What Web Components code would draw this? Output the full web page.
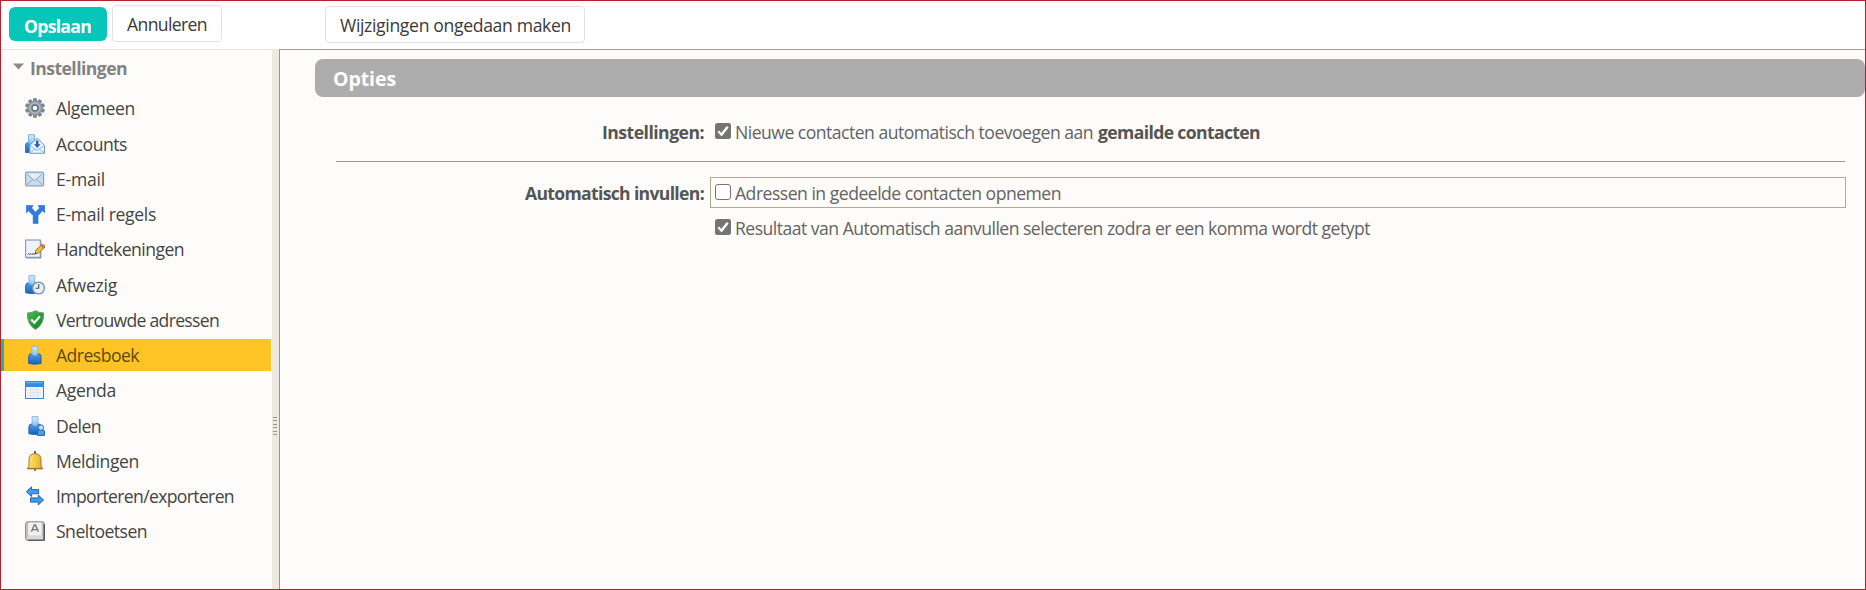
<!DOCTYPE html>
<html lang="nl">
<head>
<meta charset="utf-8">
<title>Instellingen - Adresboek</title>
<style>
  html, body { margin: 0; height: 100%; }
  body {
    overflow: hidden;
    font-family: "Open Sans", "Noto Sans", sans-serif;
    font-size: 17.6px;
    line-height: 20px;
    color: #444;
  }
</style>
</head>
<body>
<settings-page>
  <tool-bar slot="toolbar">
    <tool-button primary><fit-label width="67">Opslaan</fit-label></tool-button>
    <tool-button><fit-label width="80">Annuleren</fit-label></tool-button>
    <tool-button detached><fit-label width="231">Wijzigingen ongedaan maken</fit-label></tool-button>
  </tool-bar>
  <side-nav slot="nav">
    <fit-label slot="title" width="97">Instellingen</fit-label>
    <nav-item icon="gear"><fit-label width="79">Algemeen</fit-label></nav-item>
    <nav-item icon="accounts"><fit-label width="71">Accounts</fit-label></nav-item>
    <nav-item icon="mail"><fit-label width="49">E-mail</fit-label></nav-item>
    <nav-item icon="rules"><fit-label width="100">E-mail regels</fit-label></nav-item>
    <nav-item icon="signature"><fit-label width="128">Handtekeningen</fit-label></nav-item>
    <nav-item icon="away"><fit-label width="61">Afwezig</fit-label></nav-item>
    <nav-item icon="shield"><fit-label width="163">Vertrouwde adressen</fit-label></nav-item>
    <nav-item icon="person" selected><fit-label width="83">Adresboek</fit-label></nav-item>
    <nav-item icon="calendar"><fit-label width="60">Agenda</fit-label></nav-item>
    <nav-item icon="share"><fit-label width="45">Delen</fit-label></nav-item>
    <nav-item icon="bell"><fit-label width="83">Meldingen</fit-label></nav-item>
    <nav-item icon="transfer"><fit-label width="178">Importeren/exporteren</fit-label></nav-item>
    <nav-item icon="key"><fit-label width="91">Sneltoetsen</fit-label></nav-item>
  </side-nav>
  <option-panel>
    <fit-label slot="title" width="63">Opties</fit-label>
    <option-group>
      <fit-label slot="label" width="102">Instellingen:</fit-label>
      <option-check checked>
        <fit-label width="358">Nieuwe contacten automatisch toevoegen aan</fit-label>
        <fit-label width="162" bold>gemailde contacten</fit-label>
      </option-check>
    </option-group>
    <option-rule></option-rule>
    <option-group>
      <fit-label slot="label" width="179">Automatisch invullen:</fit-label>
      <option-check framed><fit-label width="326">Adressen in gedeelde contacten opnemen</fit-label></option-check>
      <option-check checked><fit-label width="635">Resultaat van Automatisch aanvullen selecteren zodra er een komma wordt getypt</fit-label></option-check>
    </option-group>
  </option-panel>
</settings-page>

<script>
'use strict';

const PERSON = (x, y, s) => `
  <g transform="translate(${x} ${y}) scale(${s})">
    <path d="M.7 18.6V11.5q0-3 3-3h6.6q3 0 3 3v7.1q-6.3 1.4-12.6 0z" fill="url(#blue)" stroke="#2262ab"/>
    <path d="M4 1h6v8q-3 2.6-6 0z" fill="url(#head)" stroke="#7fb3e2" stroke-width=".9"/>
  </g>`;

const ICONS = {
  gear: `
    <g fill="#7d8893" stroke="#626c76" stroke-width=".6">
      ${[0, 36, 72, 108, 144].map(a => `<rect x="8.4" y=".5" width="3.2" height="19" rx=".7" transform="rotate(${a} 10 10)"/>`).join('')}
    </g>
    <circle cx="10" cy="10" r="7.2" fill="#8c98a4"/>
    <circle cx="10" cy="10" r="5.1" fill="none" stroke="#b4bec7" stroke-width="1.3"/>
    <circle cx="10" cy="10" r="2.9" fill="#fdfcfa" stroke="#626c76" stroke-width="1.2"/>`,
  accounts: `
    <path d="M.5 18.5V11q0-2.5 3-2.5h5v10z" fill="url(#blue)" stroke="#3b79b7"/>
    <path d="M3.5.7h6v8.5h-6z" fill="url(#head)" stroke="#82b3df"/>
    <path d="M4.8 11.3L12.2 4l7.3 7.3v8h-14.7z" fill="#e6f1fc" stroke="#769cc9"/>
    <path d="M5 11.7l7 4.6 7.3-4.6M5 19l5-4M19.3 19l-5-4" fill="none" stroke="#91b2d8" stroke-width=".9"/>
    <path d="M11 6.5h2.4v3.7h2.1L12.2 14 9 10.2h2z" fill="#215fbd"/>`,
  mail: `
    <rect x=".6" y="3.2" width="18" height="13.6" rx="1" fill="#cbdcee" stroke="#8ba4be" stroke-width="1.2"/>
    <path d="M2 5l7.5 6.8L17 5M2 15.6l5.5-5.2m4 0l5.5 5.2" fill="none" stroke="#8da7c4"/>
    <path d="M2.8 4.8h13.4L9.5 10.7z" fill="#e4effa"/>`,
  rules: `
    <path d="M1.5 1.5H8L6.6 4l4 4.2 4-4.2-1.4-2.5h6.6v7.3l-2.2-2-4.6 4.8v7.8H8.2v-7.8L3.6 6.8l-2.1 2z" fill="#2f7ce0" stroke="#2667bd" stroke-width=".6"/>`,
  signature: `
    <rect x=".7" y="1" width="14.6" height="17.3" fill="#eef3fa" stroke="#758ca8"/>
    <path d="M15.8 2v16.8H1.5" fill="none" stroke="#8799ae" stroke-width="1.2"/>
    <path d="M2.5 15.5l1.2-1 1 1 1.2-1 1 1 1.2-1 1.5 1" fill="none" stroke="#394657"/>
    <path d="M10 15l1-4.2 6-5 2.5 2.8-5.8 5.3z" fill="#f2c535" stroke="#7b642c" stroke-width=".8"/>
    <path d="M16 6.6l1.3-1.2q2.8 0 2.5 2.9l-1.4 1.2z" fill="#d97a66" stroke="#915549" stroke-width=".6"/>
    <path d="M9.7 15.2l.6-2 1.4 1.2z" fill="#2d2d2d"/>`,
  away: `${PERSON(0, -.4, .98)}
    <circle cx="13.5" cy="13" r="5.9" fill="#e7eef5" stroke="#7891aa" stroke-width="1.3"/>
    <path d="M13.7 9v4.3h-3.3" fill="none" stroke="#425469" stroke-width="1.1"/>`,
  shield: `
    <path d="M10.5.7q3.7 2.5 8 2.2Q19.3 14 10.5 19.5 1.7 14 2.5 2.9q4.3.3 8-2.2z" fill="url(#green)" stroke="#70907a"/>
    <path d="M6.2 9.5l3.1 3.2L15 6.2" fill="none" stroke="#fff" stroke-width="2.2"/>`,
  person: PERSON(3, .3, .98),
  calendar: `
    <rect x=".5" y="1.5" width="18" height="17" fill="#edf2f8" stroke="#4c82bd"/>
    <path d="M1 2h17v5H1z" fill="#338ae5"/>
    <path d="M1.5 2.7h16" stroke="#77bafa"/>
    <path d="M4 9.5h12M4 12.5h12M4 15.5h9M5.5 8v9M9 8v9M12.5 8v9" stroke="#d9dee5" stroke-width=".6"/>`,
  share: `${PERSON(3.2, -.4, .98)}
    <path d="M12.5 19.4V16q0-2.3 2.3-2.3h2.4q2.3 0 2.3 2.3v3.4z" fill="#4a9df0" stroke="#1f5eac"/>
    <circle cx="16" cy="11.6" r="2.7" fill="#c1e1ff" stroke="#2f72bd"/>`,
  bell: `
    <path d="M10 0v3M10 17v2.7" stroke="#776844" stroke-width="2"/>
    <path d="M4 15V9Q4 2.7 10 2.7T16 9v6l1.5 2.7h-15z" fill="url(#gold)" stroke="#a37925"/>
    <path d="M2.5 17.5h15" stroke="#9a752f" stroke-width="1.3"/>`,
  transfer: `
    <path d="M1.3 5.7L6.6.8v2.8h7v4.2h-7v2.8z" fill="#419be5" stroke="#2469ae" stroke-linejoin="round"/>
    <path d="M18.6 14l-5.3-4.9v2.8H5.5v4.2h7.8v2.8z" fill="#419be5" stroke="#2469ae" stroke-linejoin="round"/>`,
  key: `
    <rect x=".6" y=".8" width="18.8" height="18.6" rx="2" fill="#c2c2c2" stroke="#8a8a8a"/>
    <path d="M19.2 3v16.2H3" fill="none" stroke="#4c4c4c" stroke-width="1.3"/>
    <path d="M1.3 18.3L3.6 14V2.3h12.8V14l1.6 4.3z" fill="#d9d9d9"/>
    <rect x="3.2" y="1.5" width="13.4" height="12.8" rx="1" fill="#f1f1f1"/>
    <path d="M6.4 10.8L9.3 4h1.2l2.9 6.8M7.6 8.6h4.6" fill="none" stroke="#777" stroke-width="1.4"/>`
};

const GRADIENTS = `
  <defs>
    <linearGradient id="blue" x2="0" y2="1"><stop stop-color="#4c9eec"/><stop offset="1" stop-color="#1b5fb3"/></linearGradient>
    <linearGradient id="head" x2="0" y2="1"><stop stop-color="#d6ebfb"/><stop offset="1" stop-color="#8fc3ef"/></linearGradient>
    <linearGradient id="green" x2="1" y2="1"><stop stop-color="#44c04d"/><stop offset="1" stop-color="#08821d"/></linearGradient>
    <linearGradient id="gold"><stop stop-color="#ffe778"/><stop offset="1" stop-color="#e9ae24"/></linearGradient>
  </defs>`;

class BaseElement extends HTMLElement {
  connectedCallback() {
    if (this.shadowRoot) return;
    this.attachShadow({ mode: 'open' });
    this.shadowRoot.innerHTML = this.render();
  }
}

class SettingsPage extends BaseElement {
  render() {
    return `
      <style>
        :host {
          display: grid;
          grid-template-rows: 48px 1fr;
          grid-template-columns: 271px 7px 1fr;
          box-sizing: border-box;
          height: 100vh;
          border: 1px solid #b61f2b;
          background: #fdfcfa;
        }
        .top { grid-column: 1 / -1; background: #fff; }
        .nav { border-top: 1px solid #e9e6e1; }
        .splitter {
          display: grid;
          align-content: end;
          justify-content: start;
          gap: 2.4px;
          padding: 0 0 154px 1px;
          background: #eeeae1;
        }
        .splitter i { width: 4px; height: 1px; background: #99958d; }
        main { border-left: 1px solid #99968f; border-top: 1px solid #a29f98; }
      </style>
      <div class="top"><slot name="toolbar"></slot></div>
      <div class="nav"><slot name="nav"></slot></div>
      <div class="splitter"><i></i><i></i><i></i><i></i><i></i><i></i></div>
      <main><slot></slot></main>
    `;
  }
}

class ToolBar extends BaseElement {
  render() {
    return `
      <style>
        :host { display: flex; align-items: flex-start; padding: 4px 8px 0; gap: 5px; }
      </style>
      <slot></slot>
    `;
  }
}

class ToolButton extends BaseElement {
  render() {
    return `
      <style>
        :host { display: block; }
        button {
          display: block;
          box-sizing: border-box;
          height: 37px;
          padding: 0 14px;
          border: 1px solid #e2e2e2;
          border-radius: 4px;
          background: #fff;
          color: #3a3a3a;
          font: inherit;
        }
        :host([primary]) button {
          height: 34px;
          margin-top: 2px;
          padding: 4px 16px 0 15px;
          border: 0;
          border-radius: 6px;
          background: #06c5b9;
          color: #fff;
          font-weight: 700;
        }
        :host([detached]) { margin: 1px 0 0 98px; }
        :host([detached]) button { padding: 0 13px 0 14px; }
      </style>
      <button type="button"><slot></slot></button>
    `;
  }
}

class SideNav extends BaseElement {
  render() {
    return `
      <style>
        :host { display: block; }
        header {
          display: flex;
          align-items: center;
          gap: 6px;
          height: 38px;
          padding: 0 0 3px 12px;
          box-sizing: border-box;
          color: #828282;
          font-weight: 700;
        }
        header svg { display: block; margin-top: -2px; }
        nav { display: grid; gap: 3.25px; padding-top: 4.3px; }
      </style>
      <header>
        <svg width="11" height="7"><path d="M0 .5h11L5.5 6.5z" fill="#898989"/></svg>
        <slot name="title"></slot>
      </header>
      <nav><slot></slot></nav>
    `;
  }
}

class NavItem extends BaseElement {
  render() {
    return `
      <style>
        :host {
          display: flex;
          align-items: center;
          gap: 11px;
          box-sizing: border-box;
          height: 32px;
          margin-right: 1px;
          padding-left: 21px;
          border-left: 3px solid transparent;
        }
        :host([selected]) {
          border-left-color: #1fb5a5;
          background: #ffc423;
          color: #5c481a;
        }
        svg { flex: none; }
      </style>
      <svg width="20" height="20" viewBox="0 0 20 20">${GRADIENTS}${ICONS[this.getAttribute('icon')]}</svg>
      <slot></slot>
    `;
  }
}

class OptionPanel extends BaseElement {
  render() {
    return `
      <style>
        :host { display: block; padding: 9px 0 0 35px; color: #636363; }
        h2 {
          display: flex;
          align-items: center;
          box-sizing: border-box;
          height: 38px;
          margin: 0;
          padding: 2px 0 0 18px;
          border-radius: 8px;
          background: #adadad;
          color: #fff;
          font-size: 19.5px;
          font-weight: 700;
        }
        .body { display: grid; padding: 19px 19px 0 21px; }
      </style>
      <h2><slot name="title"></slot></h2>
      <div class="body"><slot></slot></div>
    `;
  }
}

class OptionGroup extends BaseElement {
  render() {
    return `
      <style>
        :host { display: grid; grid-template-columns: 368px 1fr; column-gap: 6px; }
        .label {
          display: flex;
          justify-content: flex-end;
          align-items: center;
          height: 32px;
          color: #555;
          font-weight: 700;
        }
        .options { display: grid; gap: 4px; }
      </style>
      <div class="label"><slot name="label"></slot></div>
      <div class="options"><slot></slot></div>
    `;
  }
}

class OptionRule extends BaseElement {
  render() {
    return `
      <style>
        :host { display: block; height: 1px; margin: 13px 1px 15px 0; background: #999895; }
      </style>
    `;
  }
}

class OptionCheck extends BaseElement {
  render() {
    const box = this.hasAttribute('checked')
      ? '<rect width="16" height="16" rx="2.5" fill="#747474"/><path d="M3.3 8.3l3.2 3.4 6.2-8" fill="none" stroke="#fff" stroke-width="2.4"/>'
      : '<rect x=".5" y=".5" width="15" height="15" rx="2.5" fill="#fff" stroke="#757575"/>';
    return `
      <style>
        :host {
          display: flex;
          align-items: center;
          gap: 5px;
          box-sizing: border-box;
          height: 32px;
          padding-left: 4px;
          border: 1px solid transparent;
        }
        :host([framed]) { height: 31px; border-color: #abae89; }
        svg { flex: none; margin: -2px -1px 0 0; }
      </style>
      <svg width="16" height="16">${box}</svg>
      <slot></slot>
    `;
  }
}

/* One line of text, tracked so that it fills the width (px) it was given. */
class FitLabel extends BaseElement {
  connectedCallback() {
    super.connectedCallback();
    this.fit();
  }

  render() {
    return `
      <style>
        :host { display: block; flex: none; white-space: nowrap; }
        :host([bold]) { font-weight: 700; color: #555; }
        span { display: inline-block; vertical-align: top; }
      </style>
      <span><slot></slot></span>
    `;
  }

  fit() {
    const width = Number(this.getAttribute('width'));
    const span = this.shadowRoot.querySelector('span');
    const natural = span.getBoundingClientRect().width;
    if (!width || !natural) return;
    span.style.letterSpacing = (width - natural) / this.textContent.length + 'px';
    this.style.width = width + 'px';
  }
}

customElements.define('settings-page', SettingsPage);
customElements.define('tool-bar', ToolBar);
customElements.define('tool-button', ToolButton);
customElements.define('side-nav', SideNav);
customElements.define('nav-item', NavItem);
customElements.define('option-panel', OptionPanel);
customElements.define('option-group', OptionGroup);
customElements.define('option-rule', OptionRule);
customElements.define('option-check', OptionCheck);
customElements.define('fit-label', FitLabel);
</script>
</body>
</html>
